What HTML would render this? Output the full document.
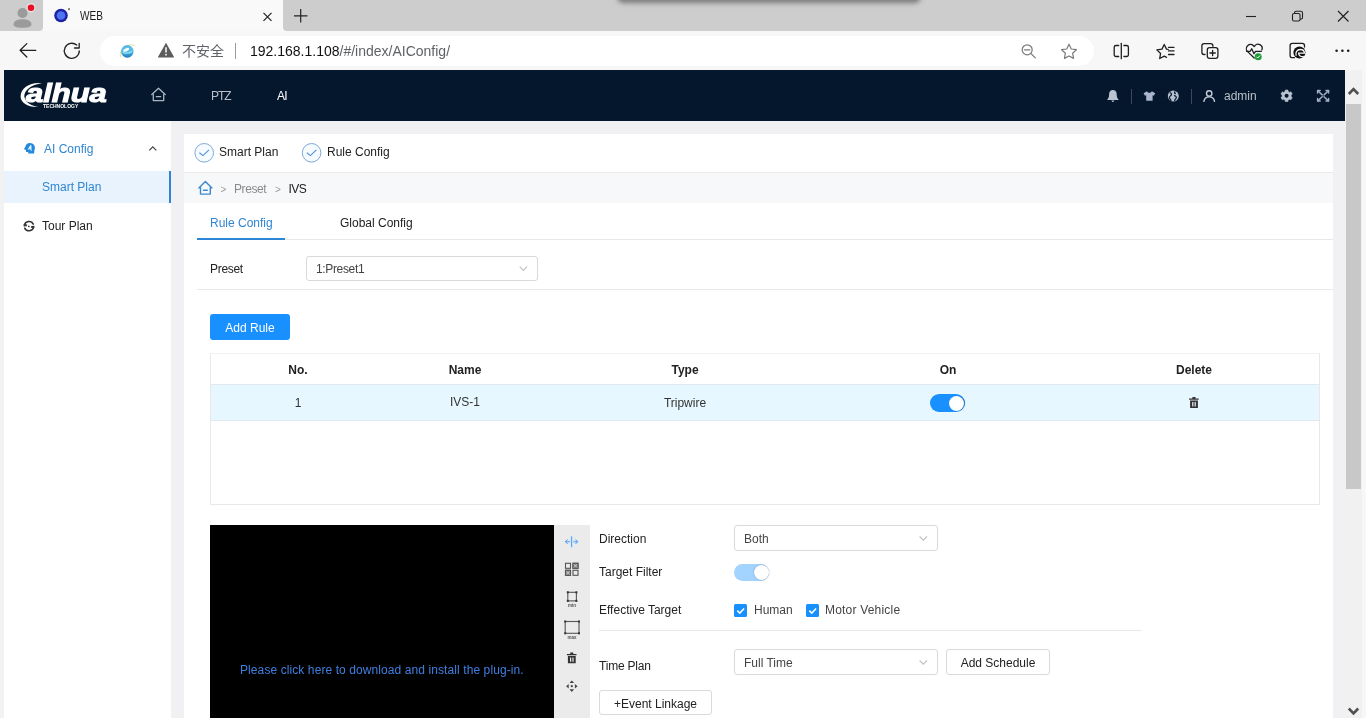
<!DOCTYPE html>
<html lang="en">
<head>
<meta charset="utf-8">
<title>WEB</title>
<style>
*{box-sizing:border-box;margin:0;padding:0}
html,body{width:1366px;height:718px;overflow:hidden;background:#f7f7f7}
body{will-change:transform;font-family:"Liberation Sans","Noto Sans CJK SC",sans-serif;font-size:12px;line-height:14px;color:#1f1f1f;position:relative}
.a{position:absolute;white-space:nowrap}
svg{display:block;overflow:visible;position:absolute}
.blue{color:#2f86d2}
.line{background:#e8e8e8;height:1px}
.selbox{height:25px;border:1px solid #d9d9d9;border-radius:3px;background:#fff;color:#444;line-height:23px;padding:1px 0 0 9px}
.btn{height:25px;border:1px solid #d9d9d9;border-radius:3px;background:#fff;color:#222;line-height:23px;padding-top:2px;text-align:center}
.lbl{color:#222}
.th{font-weight:bold;color:#222;text-align:center;width:80px}
.td{color:#333;text-align:center;width:80px}
.sw{width:35px;height:18px;border-radius:9px;background:#1890ff}
.sw i{position:absolute;right:1.5px;top:1.5px;width:15px;height:15px;border-radius:8px;background:#fff;box-shadow:1px 0 1px rgba(0,35,80,.35)}
.cb{width:13px;height:13px;border-radius:1.5px;background:#1890ff}
</style>
</head>
<body>
<!-- ================= browser chrome ================= -->
<div class="a" id="tabbar" style="left:0;top:0;width:43px;height:31px;background:#cdcdcd;border-radius:0 0 4px 0"></div>
<div class="a" id="tabbar2" style="left:283px;top:0;width:1083px;height:31px;background:#cdcdcd;border-radius:0 0 0 4px;overflow:hidden"></div>
<div class="a" id="topshadow" style="left:619px;top:-7px;width:300px;height:8px;border-radius:0 0 5px 5px;background:#8a8a8a;box-shadow:0 0 5px 2px rgba(100,100,100,.8)"></div>
<div class="a" id="tab" style="left:43px;top:0;width:240px;height:31px;background:#f9f9f9"></div>
<div class="a" id="tabtitle" style="left:80px;top:9px;font-size:12px;color:#1b1b1b;transform:scaleX(.84);transform-origin:0 0">WEB</div>
<div class="a" id="omni" style="left:100px;top:36px;width:994px;height:30px;border-radius:15px;background:#fff"></div>
<div class="a" id="insec" style="left:182px;top:41px;font-size:14px;line-height:20px;color:#5f6368">不安全</div>
<div class="a" style="left:235px;top:43px;width:1px;height:16px;background:#9a9a9a"></div>
<div class="a" id="url" style="left:250px;top:41px;font-size:14px;line-height:20px;color:#111">192.168.1.108<span style="color:#5f6368">/#/index/AIConfig/</span></div>

<!-- ================= page ================= -->
<div class="a" style="left:0;top:70px;width:4px;height:648px;background:#f2f2f2"></div>
<div class="a" id="pagebg" style="left:4px;top:70px;width:1341px;height:648px;background:#f1f1f3"></div>
<div class="a" id="hdr" style="left:4px;top:70px;width:1341px;height:51px;background:#04172d"></div>
<div class="a" id="logo" style="left:26px;top:78px;color:#fff;font-weight:bold;font-style:italic;font-size:26px;line-height:30px;-webkit-text-stroke:1.1px #fff;transform:scaleX(1.19);transform-origin:0 0">alhua</div>
<div class="a" id="logosub" style="left:43px;top:103px;color:#fff;font-weight:bold;font-size:5px;line-height:6px;letter-spacing:0">TECHNOLOGY</div>
<div class="a" style="left:211px;top:89px;color:#b9c0c9;letter-spacing:-1px">PTZ</div>
<div class="a" style="left:277px;top:89px;color:#fff;letter-spacing:-.7px">AI</div>
<div class="a" style="left:1224px;top:89px;color:#b9c0c9">admin</div>
<div class="a" style="left:1131px;top:89px;width:1px;height:15px;background:#3a4a5e"></div>
<div class="a" style="left:1191px;top:89px;width:1px;height:15px;background:#3a4a5e"></div>

<!-- sidebar -->
<div class="a" id="side" style="left:4px;top:121px;width:167px;height:597px;background:#fff"></div>
<div class="a" id="sidesel" style="left:4px;top:171px;width:167px;height:32px;background:#e9f3fd;border-right:2px solid #3184d4"></div>
<div class="a blue" style="left:44px;top:142px">AI Config</div>
<div class="a blue" style="left:42px;top:180px">Smart Plan</div>
<div class="a" style="left:42px;top:219px;color:#222">Tour Plan</div>

<!-- main panel -->
<div class="a" id="main" style="left:184px;top:134px;width:1149px;height:584px;background:#fff"></div>
<div class="a lbl" style="left:219px;top:145px">Smart Plan</div>
<div class="a lbl" style="left:327px;top:145px">Rule Config</div>
<div class="a" id="crumb" style="left:184px;top:172px;width:1149px;height:31px;background:#f7f8fa;border-top:1px solid #e9e9e9"></div>
<div class="a" style="left:220.5px;top:182.5px;color:#9a9a9a;font-size:10px">&gt;</div>
<div class="a" style="left:234px;top:182px;color:#8a8a8a;letter-spacing:-.4px">Preset</div>
<div class="a" style="left:275px;top:182.5px;color:#9a9a9a;font-size:10px">&gt;</div>
<div class="a" style="left:288.5px;top:182px;color:#222;letter-spacing:-.5px">IVS</div>
<div class="a blue" style="left:210px;top:216px">Rule Config</div>
<div class="a lbl" style="left:340px;top:216px">Global Config</div>
<div class="a line" style="left:197px;top:239px;width:1136px"></div>
<div class="a" style="left:197px;top:238px;width:88px;height:2px;background:#2d86d6"></div>
<div class="a lbl" style="left:210px;top:262px;letter-spacing:-.3px">Preset</div>
<div class="a selbox" style="left:306px;top:256px;width:232px;letter-spacing:-.35px">1:Preset1</div>
<div class="a line" style="left:197px;top:289px;width:1136px"></div>
<div class="a" id="addrule" style="left:210px;top:314px;width:80px;height:26px;border-radius:3px;background:#1890ff;color:#fff;text-align:center;line-height:28px">Add Rule</div>

<!-- table -->
<div class="a" id="tbl" style="left:210px;top:353px;width:1110px;height:152px;border:1px solid #e8e8e8;border-top-color:#f1f1f1"></div>
<div class="a" id="row" style="left:211px;top:384px;width:1108px;height:37px;background:#e6f7ff;border-top:1px solid #e1e8ee;border-bottom:1px solid #e1e8ee"></div>
<div class="a th" style="left:258px;top:363px">No.</div>
<div class="a th" style="left:425px;top:363px">Name</div>
<div class="a th" style="left:645px;top:363px">Type</div>
<div class="a th" style="left:908px;top:363px">On</div>
<div class="a th" style="left:1154px;top:363px">Delete</div>
<div class="a td" style="left:258px;top:396px">1</div>
<div class="a td" style="left:425px;top:395px">IVS-1</div>
<div class="a td" style="left:645px;top:396px">Tripwire</div>
<div class="a sw" style="left:930px;top:394px"><i></i></div>

<!-- video -->
<div class="a" id="video" style="left:210px;top:525px;width:344px;height:193px;background:#000"></div>
<div class="a" id="vtools" style="left:554px;top:525px;width:36px;height:193px;background:#ebebeb"></div>
<div class="a" style="left:240px;top:663px;color:#3f7fe0;letter-spacing:.09px">Please click here to download and install the plug-in.</div>

<!-- form -->
<div class="a lbl" style="left:599px;top:532px">Direction</div>
<div class="a selbox" style="left:734px;top:525px;width:204px;height:26px;padding-top:2px">Both</div>
<div class="a lbl" style="left:599px;top:565px">Target Filter</div>
<div class="a sw" style="left:734px;top:564px;height:17px;background:#a3d3ff"><i style="width:15px;height:15px;right:.5px;top:1px;box-shadow:0 0 1.5px rgba(60,80,110,.55)"></i></div>
<div class="a lbl" style="left:599px;top:603px">Effective Target</div>
<div class="a cb" style="left:734px;top:604px"></div>
<div class="a lbl" style="left:754px;top:603px;color:#444">Human</div>
<div class="a cb" style="left:806px;top:604px"></div>
<div class="a lbl" style="left:825px;top:603px;color:#444;letter-spacing:.2px">Motor Vehicle</div>
<div class="a line" style="left:599px;top:630px;width:543px"></div>
<div class="a lbl" style="left:599px;top:659px;letter-spacing:-.2px">Time Plan</div>
<div class="a selbox" style="left:734px;top:649px;width:204px;height:26px;padding-top:2px">Full Time</div>
<div class="a btn" style="left:946px;top:649px;width:104px;height:26px;padding-top:2px">Add Schedule</div>
<div class="a btn" style="left:599px;top:690px;width:113px">+Event Linkage</div>

<!-- page scrollbar -->
<div class="a" style="left:1345px;top:70px;width:17px;height:648px;background:#f1f1f1"></div>
<div class="a" style="left:1346px;top:104px;width:15px;height:385px;background:#c8c8c8"></div>
<div class="a" style="left:1362px;top:70px;width:4px;height:648px;background:#f7f7f7"></div>

<!-- ================= icons overlay ================= -->
<svg id="icons" width="1366" height="718" viewBox="0 0 1366 718" style="left:0;top:0;pointer-events:none">
  <!-- profile -->
  <g fill="#9b9b9b">
    <circle cx="22.5" cy="13" r="5"/>
    <path d="M13.5 24.5c0-3.6 4-5.3 9-5.3s9 1.7 9 5.3c0 2.4-4 3.3-9 3.3s-9-.9-9-3.3z"/>
  </g>
  <circle cx="31" cy="7.8" r="4.6" fill="#e6e6e6"/>
  <circle cx="31" cy="7.8" r="3.3" fill="#e81123"/>
  <!-- favicon -->
  <circle cx="61" cy="15.5" r="6.8" fill="#1d22a6"/>
  <circle cx="61" cy="15.5" r="4.3" fill="#4f74f2"/>
  <circle cx="69" cy="9.2" r="1.1" fill="#777"/>
  <!-- tab close / new tab -->
  <path d="M263.5 12.8l8 8m0-8l-8 8" stroke="#222" stroke-width="1.2" fill="none"/>
  <path d="M294 15.8h13.5M300.7 9v13.5" stroke="#222" stroke-width="1.2" fill="none"/>
  <!-- window controls -->
  <path d="M1246 16.5h10" stroke="#222" stroke-width="1.1" fill="none"/>
  <rect x="1292.5" y="13.5" width="7.5" height="7.5" rx="1.5" stroke="#222" stroke-width="1.1" fill="none"/>
  <path d="M1294.5 13.5v-.5a1.8 1.8 0 0 1 1.8-1.8h4.4a1.8 1.8 0 0 1 1.8 1.8v4.4a1.8 1.8 0 0 1-1.8 1.8h-.7" stroke="#222" stroke-width="1.1" fill="none"/>
  <path d="M1338 11l10.5 10.5m0-10.5l-10.5 10.5" stroke="#222" stroke-width="1.2" fill="none"/>
  <!-- back -->
  <path d="M35.8 50.3h-15.5M26.8 43.6l-6.7 6.7 6.7 6.7" stroke="#222" stroke-width="1.3" fill="none" stroke-linecap="round" stroke-linejoin="round"/>
  <!-- refresh -->
  <path d="M79.3 50.8a7.5 7.5 0 1 1-2.6-5.7" stroke="#222" stroke-width="1.3" fill="none" stroke-linecap="round"/>
  <path d="M79.2 43.3v4.7h-4.7" stroke="#222" stroke-width="1.3" fill="none" stroke-linecap="round" stroke-linejoin="round"/>
  <!-- IE icon -->
  <defs><linearGradient id="ieg" x1="0" y1="0" x2="0" y2="1"><stop offset="0" stop-color="#5fb4e2"/><stop offset=".5" stop-color="#55bfea"/><stop offset="1" stop-color="#1c74bd"/></linearGradient></defs>
  <path d="M121 56.8c-1.8-2.6-.4-6.8 3.4-9.5 3.4-2.5 7.6-3.2 9.6-1.7" stroke="#dde3a2" stroke-width="1.1" fill="none" stroke-linecap="round"/>
  <circle cx="127.3" cy="51.4" r="6.3" fill="url(#ieg)"/>
  <ellipse cx="126.2" cy="49.8" rx="3.3" ry="1.5" transform="rotate(-24 126.2 49.8)" fill="#f2fbff"/>
  <path d="M123.3 52.6c2.5 .9 5.6 .6 8.3-.9" stroke="#9fe0f6" stroke-width="1.3" fill="none" stroke-linecap="round"/>
  <!-- warning -->
  <path d="M166 42.8l7.9 13.9a.6.6 0 0 1-.5.9h-14.8a.6.6 0 0 1-.5-.9z" fill="#5c5c5c"/>
  <path d="M166 47.3v5.2" stroke="#fff" stroke-width="1.5" fill="none"/>
  <circle cx="166" cy="54.7" r=".9" fill="#fff"/>
  <!-- zoom out -->
  <g stroke="#7a7a7a" stroke-width="1.2" fill="none" stroke-linecap="round">
    <circle cx="1027.2" cy="49.8" r="5"/>
    <path d="M1030.8 53.4l4.5 4.5M1024.5 49.8h5.4"/>
  </g>
  <!-- star -->
  <path d="M1069 44.3l2.25 4.7 5.15 .7-3.75 3.6 .9 5.1-4.55-2.45-4.55 2.45 .9-5.1-3.75-3.6 5.15-.7z" stroke="#7a7a7a" stroke-width="1.2" fill="none" stroke-linejoin="round"/>
  <!-- split screen -->
  <g stroke="#1f1f1f" stroke-width="1.3" fill="none" stroke-linecap="round">
    <path d="M1121.3 43.3v15.4"/>
    <path d="M1118.7 45.5h-2.7a1.8 1.8 0 0 0-1.8 1.8v7.4a1.8 1.8 0 0 0 1.8 1.8h2.7"/>
    <path d="M1123.9 45.5h2.7a1.8 1.8 0 0 1 1.8 1.8v7.4a1.8 1.8 0 0 1-1.8 1.8h-2.7"/>
  </g>
  <!-- favorites -->
  <g stroke="#1f1f1f" stroke-width="1.3" fill="none" stroke-linecap="round" stroke-linejoin="round">
    <path d="M1168.2 49.4l-1.7-.25-2.25-4.7-2.25 4.7-5.15 .7 3.75 3.6-.9 5.1 4.55-2.45 2.3 1.2"/>
    <path d="M1168.5 47.3h5.5M1168.5 50.9h5.5M1168.5 54.5h5.5"/>
  </g>
  <!-- collections -->
  <g stroke="#1f1f1f" stroke-width="1.3" fill="none" stroke-linecap="round" stroke-linejoin="round">
    <path d="M1205 54.5h-.9a2.2 2.2 0 0 1-2.2-2.2v-6.5a2.2 2.2 0 0 1 2.2-2.2h6.6a2.2 2.2 0 0 1 2.2 2.2v.5"/>
    <rect x="1207.3" y="47.7" width="10.6" height="10.6" rx="2.2"/>
    <path d="M1212.6 50.3v5.4M1209.9 53h5.4"/>
  </g>
  <!-- heart / performance -->
  <g stroke="#1f1f1f" stroke-width="1.3" fill="none" stroke-linecap="round" stroke-linejoin="round">
    <path d="M1254.2 58l-6.6-6.4a4.1 4.1 0 0 1 5.9-5.9l.7 .8 .7-.8a4.1 4.1 0 0 1 6.9 4.3"/>
    <path d="M1246.5 51.3h3.7l1.5-2.6 2.3 5 1.5-2.4h5.8"/>
  </g>
  <circle cx="1258.2" cy="56.7" r="3.5" fill="#1f9d3a"/>
  <path d="M1256.5 56.8l1.2 1.2 2.3-2.5" stroke="#fff" stroke-width="1" fill="none"/>
  <!-- edge workspaces -->
  <path d="M1294.5 57.7h-2.2a2.2 2.2 0 0 1-2.2-2.2v-10a2.2 2.2 0 0 1 2.2-2.2h10a2.2 2.2 0 0 1 2.2 2.2v1.5" stroke="#1f1f1f" stroke-width="1.3" fill="none" stroke-linecap="round"/>
  <circle cx="1299.4" cy="52.5" r="6" fill="#111"/>
  <path d="M1296.2 55.8c-1.3-3.3 1-6.3 4-6.3 2.6 0 4.2 1.6 4.2 3.6h-5.8c0 2.3 2.3 4.3 5.2 3.3" stroke="#f7f7f7" stroke-width="1.3" fill="none"/>
  <!-- more dots -->
  <g fill="#1f1f1f"><circle cx="1336.6" cy="50.8" r="1.3"/><circle cx="1342.4" cy="50.8" r="1.3"/><circle cx="1348.2" cy="50.8" r="1.3"/></g>
  <!-- logo swoosh -->
  <path d="M42 83.2c-11-1.6-21.5 4.6-21.4 13.2 .1 6.6 7.6 11 17.6 10.5-6.6-.9-11.6-3.6-13.4-8.6-2.2-7.3 6.6-14 17.2-15.1z" fill="#fff"/>
  <!-- header home -->
  <g stroke="#a9b4c2" stroke-width="1.3" fill="none" stroke-linejoin="round" stroke-linecap="round">
    <path d="M151.8 94.5l6.7-6.3 6.7 6.3"/>
    <path d="M153.3 94.3v6.3h10.4v-6.3"/>
    <path d="M156.3 96.7h4.4"/>
  </g>
  <!-- bell -->
  <path d="M1112.9 90.1c-2.5 0-3.8 1.9-3.8 4.3 0 3-1 4-1.8 5v.6h11.2v-.6c-.8-1-1.8-2-1.8-5 0-2.4-1.3-4.3-3.8-4.3zM1111.5 100.6a1.4 1.4 0 0 0 2.8 0z" fill="#b9c4d0"/>
  <!-- shirt -->
  <path d="M1147 91.2c.6 1.1 1.4 1.6 2.4 1.6s1.8-.5 2.4-1.6l3.4 2-1.4 2.6-1.2-.6v5.5h-6.4v-5.5l-1.2 .6-1.4-2.6z" fill="#a9b6cd"/>
  <!-- globe -->
  <circle cx="1173.3" cy="96.1" r="5.5" fill="#b4bfd0"/>
  <path d="M1170.2 92.7c1.2 .4 1.6 1.5 1 2.4-.6 .9-2 1.2-1.8 2.6 .2 1.2 1.5 1.6 1.6 3M1174.5 95.6c1.2 .3 2.3 1.3 1.7 2.5-.4 .8-1.3 1.4-1.5 2.6M1175 91.8c-.8 .6-.6 1.5 .4 1.8" stroke="#04172d" stroke-width="1.2" fill="none" stroke-linecap="round"/>
  <!-- user -->
  <g stroke="#c3ccd8" stroke-width="1.4" fill="none" stroke-linecap="round">
    <circle cx="1209.2" cy="93.4" r="2.7"/>
    <path d="M1203.9 101.3c.5-2.9 2.7-4.4 5.3-4.4s4.8 1.5 5.3 4.4"/>
  </g>
  <!-- gear -->
  <path d="M1285.25 90.06L1287.95 90.06L1288.02 91.43L1289.68 92.38L1290.9 91.76L1292.25 94.09L1291.1 94.84L1291.1 96.76L1292.25 97.51L1290.9 99.84L1289.68 99.22L1288.02 100.17L1287.95 101.54L1285.25 101.54L1285.18 100.17L1283.52 99.22L1282.3 99.84L1280.95 97.51L1282.1 96.76L1282.1 94.84L1280.95 94.09L1282.3 91.76L1283.52 92.38L1285.18 91.43z" fill="#b9c4d0" stroke="#b9c4d0" stroke-width=".6" stroke-linejoin="round"/>
  <circle cx="1286.6" cy="95.8" r="2" fill="#04172d"/>
  <!-- fullscreen -->
  <g stroke="#9fb0c6" stroke-width="1.5" fill="none" stroke-linecap="round" stroke-linejoin="round">
    <path d="M1317.8 90.7l4.4 4.2M1328.4 90.7l-4.4 4.2M1317.8 100.9l4.4-4.2M1328.4 100.9l-4.4-4.2"/>
    <path d="M1317.6 93v-2.5h2.6M1328.6 93v-2.5h-2.6M1317.6 98.6v2.5h2.6M1328.6 98.6v2.5h-2.6"/>
  </g>
  <!-- sidebar: AI icon -->
  <path d="M29.9 143a5 5 0 0 1 4.5 7.2l-.3 3.4h-6l.2-1.6h-2.2l-.2-2.1-2-.8 1.4-2.2a5 5 0 0 1 4.6-3.9z" fill="#2489dc"/>
  <path d="M28.2 149.5l2.6-4 .3 5.3M28.7 148.8h2.6" stroke="#dff6ff" stroke-width="1.1" fill="none" stroke-linejoin="round"/>
  <!-- sidebar chevron -->
  <path d="M149.3 150.3l3.5-3.5 3.5 3.5" stroke="#444" stroke-width="1.2" fill="none"/>
  <!-- sidebar: tour icon -->
  <g stroke="#333" stroke-width="1.5" fill="none" stroke-linecap="round">
    <path d="M24.4 225.12A4.7 4.7 0 0 1 33.26 224.11"/>
    <path d="M33.6 227.08A4.7 4.7 0 0 1 24.74 228.09"/>
  </g>
  <path d="M23.7 224.1l3.6 .4-.6 1.7-3 .2z" fill="#333"/>
  <path d="M34.3 228.1l-3.6-.4 .6-1.7 3-.2z" fill="#333"/>
  <circle cx="28.8" cy="226.3" r=".9" fill="#333"/>
  <!-- step check circles -->
  <g stroke="#7faad6" stroke-width="1" fill="#f6fbff">
    <circle cx="204.2" cy="152.8" r="9.3"/>
    <circle cx="311.6" cy="152.8" r="9.3"/>
  </g>
  <g stroke="#4a90d9" stroke-width="1.1" fill="none">
    <path d="M199.4 152.8l3.6 2.8 6-5.8"/>
    <path d="M306.8 152.8l3.6 2.8 6-5.8"/>
  </g>
  <!-- breadcrumb home -->
  <g stroke="#3b8ad0" stroke-width="1.4" fill="none" stroke-linejoin="round" stroke-linecap="round">
    <path d="M198.9 188l6.5-6.6 6.5 6.6"/>
    <path d="M200.5 187.5v6.6h9.8v-6.6"/>
    <path d="M203.5 190.3h3.8"/>
  </g>
  <!-- select chevrons -->
  <g stroke="#c0c0c0" stroke-width="1.1" fill="none">
    <path d="M519.7 266.7l3.7 3.7 3.7-3.7"/>
    <path d="M919.6 536.5l3.7 3.7 3.7-3.7"/>
    <path d="M919.6 660.5l3.7 3.7 3.7-3.7"/>
  </g>
  <!-- table trash -->
  <g fill="#333">
    <path d="M1192.4 396.9h3.1v1.6h-3.1zM1189.1 398.5h9.6v1.3h-9.6zM1190.1 400.5h7.8v7.4h-7.8z"/>
  </g>
  <path d="M1192.8 402v4.4M1195.2 402v4.4" stroke="#e6f7ff" stroke-width="1.2" fill="none"/>
  <!-- video tools -->
  <g stroke="#d3e6fa" stroke-width="3" fill="none" stroke-linecap="round" stroke-linejoin="round">
    <path d="M571.6 537v9.6M569.6 541.7h-3.8M573.6 541.7h3.8"/>
  </g>
  <g stroke="#5a9ee8" stroke-width="1" fill="none">
    <path d="M571.6 536.4v10.7M569.7 541.7h-4M567.7 539.4l-2.3 2.3 2.3 2.3M573.5 541.7h4M575.5 539.4l2.3 2.3-2.3 2.3"/>
  </g>
  <g stroke="#555" stroke-width="1.1" fill="none">
    <rect x="565.5" y="563.3" width="5" height="5"/><rect x="573" y="563.3" width="5" height="5"/>
    <rect x="565.5" y="570.3" width="5" height="5"/><rect x="573" y="570.3" width="5" height="5"/>
    <rect x="573" y="563.3" width="5" height="5" fill="#8a8a8a"/><rect x="565.5" y="570.3" width="5" height="5" fill="#8a8a8a"/><path d="M573.8 564.1l3.4 3.4m0-3.4l-3.4 3.4M566.3 571.1l3.4 3.4m0-3.4l-3.4 3.4" stroke="#ddd" stroke-width=".7"/>
    <rect x="567.8" y="592.3" width="8.6" height="8.6"/>
    <rect x="565.2" y="621.5" width="13.8" height="11.8"/>
  </g>
  <g fill="#333">
    <rect x="566.8" y="591.3" width="2" height="2"/><rect x="575.4" y="591.3" width="2" height="2"/>
    <rect x="566.8" y="599.9" width="2" height="2"/><rect x="575.4" y="599.9" width="2" height="2"/>
    <rect x="564.2" y="620.5" width="2" height="2"/><rect x="578" y="620.5" width="2" height="2"/>
    <rect x="564.2" y="632.3" width="2" height="2"/><rect x="578" y="632.3" width="2" height="2"/>
  </g>
  <text x="572.1" y="607.3" font-family="Liberation Sans, sans-serif" font-size="4.5" font-weight="bold" text-anchor="middle" fill="#555">min</text>
  <text x="572.1" y="639.3" font-family="Liberation Sans, sans-serif" font-size="4.5" font-weight="bold" text-anchor="middle" fill="#555">max</text>
  <g fill="#333">
    <path d="M570.2 652.4h3.1v1.6h-3.1zM566.9 654h9.6v1.3h-9.6zM567.9 656h7.8v7.2h-7.8z"/>
  </g>
  <path d="M570.6 657.4v4.4M573 657.4v4.4" stroke="#ebebeb" stroke-width="1.2" fill="none"/>
  <g fill="#444">
    <path d="M571.8 680.5l2.3 2.6h-4.6zM571.8 691.9l2.3-2.6h-4.6zM566.1 686.2l2.6-2.3v4.6zM577.5 686.2l-2.6-2.3v4.6z"/>
    <circle cx="571.8" cy="686.2" r="1.1"/>
  </g>
  <!-- checkbox ticks -->
  <g stroke="#fff" stroke-width="1.5" fill="none">
    <path d="M737.3 610.6l2.5 2.5 4.3-4.6"/>
    <path d="M809.3 610.6l2.5 2.5 4.3-4.6"/>
  </g>
  <!-- page scrollbar arrows -->
  <g stroke="#505050" stroke-width="2.6" fill="none">
    <path d="M1348.8 94l4.7-4.9 4.7 4.9"/>
    <path d="M1348.8 708.5l4.7 4.9 4.7-4.9"/>
  </g>
</svg>
</body>
</html>
